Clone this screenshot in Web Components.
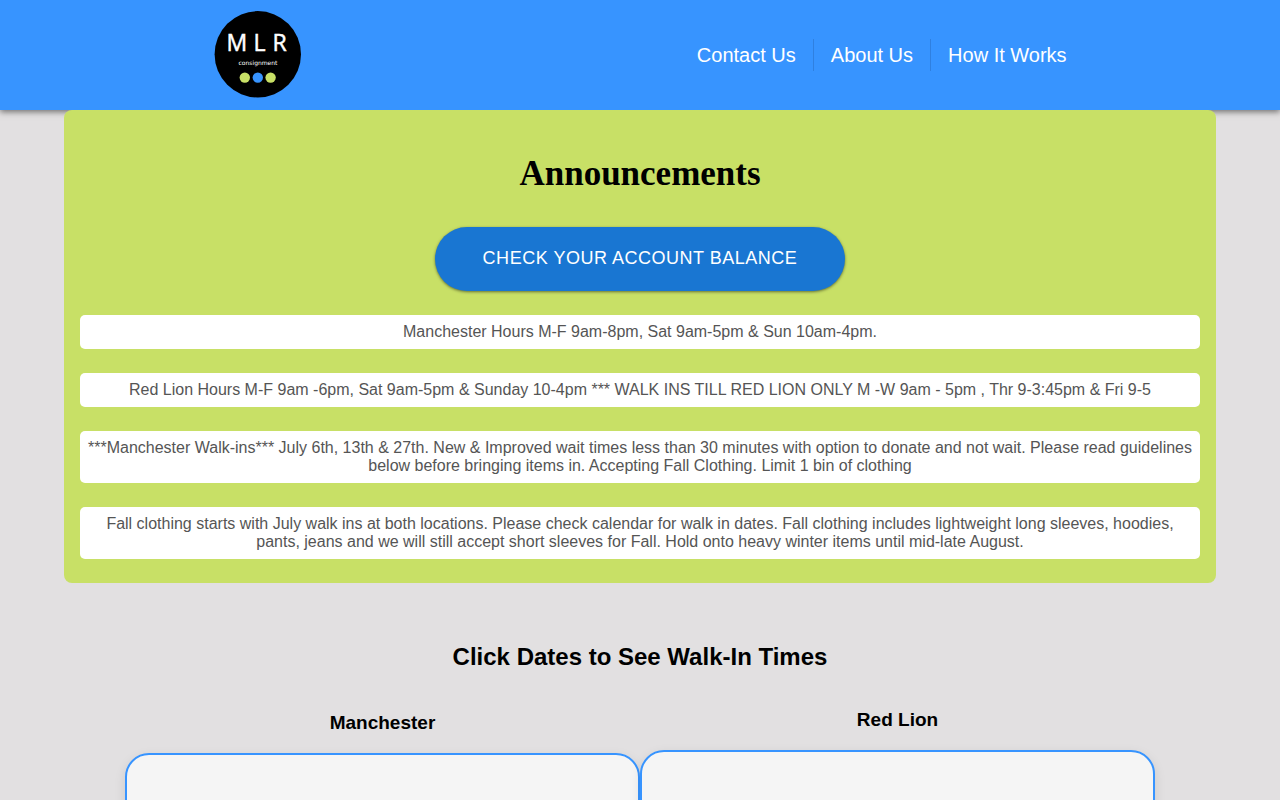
<!DOCTYPE html>
<html lang="en">
<head>
<meta charset="utf-8">
<meta name="viewport" content="width=device-width, initial-scale=1">
<title>MLR Consignment</title>
<style>
    :root {
        --blue: #3794ff;
        --blue-dark: #1976d2;
        --green: #c8e066;
        --page: #e2e0e1;
    }

    body {
        margin: 0;
        background-color: var(--page);
        font-family: "Liberation Sans", Arial, sans-serif;
    }
</style>
</head>
<body>
<site-header>
    <site-logo slot="logo"></site-logo>
    <nav-link href="#contact">Contact Us</nav-link>
    <nav-link href="#about">About Us</nav-link>
    <nav-link href="#how">How It Works</nav-link>
</site-header>
<main>
    <announcement-board heading="Announcements">
        <balance-button slot="action">Check Your Account Balance</balance-button>
        <announcement-item>Manchester Hours M-F 9am-8pm, Sat 9am-5pm &amp; Sun 10am-4pm.</announcement-item>
        <announcement-item>Red Lion Hours M-F 9am -6pm, Sat 9am-5pm &amp; Sunday 10-4pm *** WALK INS TILL RED LION ONLY M -W 9am - 5pm , Thr 9-3:45pm &amp; Fri 9-5</announcement-item>
        <announcement-item>***Manchester Walk-ins*** July 6th, 13th &amp; 27th. New &amp; Improved wait times less than 30 minutes with option to donate and not wait. Please read guidelines below before bringing items in. Accepting Fall Clothing. Limit 1 bin of clothing</announcement-item>
        <announcement-item>Fall clothing starts with July walk ins at both locations. Please check calendar for walk in dates. Fall clothing includes lightweight long sleeves, hoodies, pants, jeans and we will still accept short sleeves for Fall. Hold onto heavy winter items until mid-late August.</announcement-item>
    </announcement-board>
    <walkin-section heading="Click Dates to See Walk-In Times">
        <store-calendar store="Manchester"></store-calendar>
        <store-calendar store="Red Lion" tall></store-calendar>
    </walkin-section>
</main>

<script>
class SiteHeader extends HTMLElement {
    constructor() {
        super();
        this.attachShadow({ mode: 'open' });

        const CSS = /* css */
        `
        :host {
            display: block;
            background-color: var(--blue);
            box-shadow: 0 2px 6px rgba(0, 0, 0, 0.5);
        }

        header {
            display: flex;
            align-items: center;
            justify-content: space-between;
            width: 66.66%;
            min-height: 110px;
            margin: 0 auto;
        }

        nav {
            display: flex;
            align-items: center;
        }
        `;

        this.shadowRoot.innerHTML = /* html */
        `
        <style>${CSS}</style>
        <header>
            <slot name="logo"></slot>
            <nav><slot></slot></nav>
        </header>
        `;
    }
}

class SiteLogo extends HTMLElement {
    constructor() {
        super();
        this.attachShadow({ mode: 'open' });

        const CSS = /* css */
        `
        :host {
            display: block;
        }

        a, svg {
            display: block;
        }

        text {
            fill: #fff;
        }

        .name {
            font-family: "Open Sans", sans-serif;
            font-size: 23px;
        }

        .tag {
            font-family: "DejaVu Sans", sans-serif;
            font-size: 6px;
            text-anchor: middle;
        }
        `;

        this.shadowRoot.innerHTML = /* html */
        `
        <style>${CSS}</style>
        <a href="#home" aria-label="MLR consignment home">
            <svg width="88" height="88" viewBox="0 0 88 88">
                <circle cx="44.8" cy="43.3" r="43.2" fill="#000"/>
                <text class="name" x="13.5 40.5 59.5" y="40" stroke="#fff" stroke-width=".5">MLR</text>
                <text class="tag" x="45" y="54">consignment</text>
                <circle cx="31.8" cy="66.6" r="5.2" fill="#c8e066"/>
                <circle cx="44.8" cy="66.6" r="5.2" fill="#3794ff"/>
                <circle cx="57.6" cy="66.6" r="5.2" fill="#c8e066"/>
            </svg>
        </a>
        `;
    }
}

class NavLink extends HTMLElement {
    constructor() {
        super();
        this.attachShadow({ mode: 'open' });

        const href = this.getAttribute('href') || '#';

        const CSS = /* css */
        `
        :host {
            display: block;
            padding: 4px 17px;
            border-right: 1px solid #2f80e0;
        }

        :host(:last-child) {
            padding-right: 0;
            border-right: none;
        }

        a {
            color: #fff;
            font-size: 20px;
            line-height: 24px;
            text-decoration: none;
        }

        a:hover {
            text-decoration: underline;
        }
        `;

        this.shadowRoot.innerHTML = /* html */
        `
        <style>${CSS}</style>
        <a href="${href}"><slot></slot></a>
        `;
    }
}

class AnnouncementBoard extends HTMLElement {
    constructor() {
        super();
        this.attachShadow({ mode: 'open' });

        const heading = this.getAttribute('heading') || '';

        const CSS = /* css */
        `
        :host {
            display: block;
            box-sizing: border-box;
            width: 90%;
            margin: 0 auto;
            padding: 40px 16px 24px;
            background-color: var(--green);
            border-radius: 8px;
        }

        section {
            display: flex;
            flex-direction: column;
            gap: 24px;
        }

        h1 {
            margin: 0;
            padding-bottom: 5px;
            font-family: "Liberation Serif", "Times New Roman", serif;
            font-size: 35px;
            line-height: 48px;
            text-align: center;
        }
        `;

        this.shadowRoot.innerHTML = /* html */
        `
        <style>${CSS}</style>
        <section>
            <h1>${heading}</h1>
            <slot name="action"></slot>
            <slot></slot>
        </section>
        `;
    }
}

class BalanceButton extends HTMLElement {
    constructor() {
        super();
        this.attachShadow({ mode: 'open' });

        const CSS = /* css */
        `
        :host {
            display: block;
            text-align: center;
        }

        button {
            display: block;
            min-height: 64px;
            margin: 0 auto;
            padding: 0 48px 2px;
            border: none;
            border-radius: 32px;
            background-color: var(--blue-dark);
            box-shadow: 0 1px 3px rgba(0, 0, 0, 0.5);
            color: #fff;
            font-family: inherit;
            font-size: 18px;
            letter-spacing: 0.02857em;
            text-transform: uppercase;
            cursor: pointer;
        }

        button:hover {
            background-color: #1565c0;
        }
        `;

        this.shadowRoot.innerHTML = /* html */
        `
        <style>${CSS}</style>
        <button type="button"><slot></slot></button>
        `;
    }
}

class AnnouncementItem extends HTMLElement {
    constructor() {
        super();
        this.attachShadow({ mode: 'open' });

        const CSS = /* css */
        `
        :host {
            display: block;
            padding: 8px;
            background-color: #fff;
            border-radius: 5px;
        }

        p {
            margin: 0;
            color: #555;
            font-size: 16px;
            line-height: 18px;
            text-align: center;
        }
        `;

        this.shadowRoot.innerHTML = /* html */
        `
        <style>${CSS}</style>
        <p><slot></slot></p>
        `;
    }
}

class WalkinSection extends HTMLElement {
    constructor() {
        super();
        this.attachShadow({ mode: 'open' });

        const heading = this.getAttribute('heading') || '';

        const CSS = /* css */
        `
        :host {
            display: block;
            padding: 60px 0;
        }

        h2 {
            margin: 0;
            font-size: 24px;
            line-height: 28px;
            text-align: center;
        }

        .calendars {
            display: flex;
            justify-content: center;
            align-items: center;
            margin-top: 38px;
        }
        `;

        this.shadowRoot.innerHTML = /* html */
        `
        <style>${CSS}</style>
        <h2>${heading}</h2>
        <div class="calendars"><slot></slot></div>
        `;
    }
}

class StoreCalendar extends HTMLElement {
    constructor() {
        super();
        this.attachShadow({ mode: 'open' });

        const store = this.getAttribute('store') || '';

        const CSS = /* css */
        `
        :host {
            display: block;
            flex: 1;
            max-width: 515px;
        }

        h3 {
            margin: 0 0 19px;
            font-size: 19px;
            line-height: 22px;
            text-align: center;
        }

        .calendar {
            min-height: 420px;
            border: 2px solid var(--blue);
            border-radius: 24px;
            background-color: #f5f5f5;
            box-shadow: 0 4px 12px rgba(0, 0, 0, 0.1);
        }

        :host([tall]) .calendar {
            min-height: 426px;
        }
        `;

        this.shadowRoot.innerHTML = /* html */
        `
        <style>${CSS}</style>
        <h3>${store}</h3>
        <div class="calendar"></div>
        `;
    }
}

customElements.define('site-header', SiteHeader);
customElements.define('site-logo', SiteLogo);
customElements.define('nav-link', NavLink);
customElements.define('announcement-board', AnnouncementBoard);
customElements.define('balance-button', BalanceButton);
customElements.define('announcement-item', AnnouncementItem);
customElements.define('walkin-section', WalkinSection);
customElements.define('store-calendar', StoreCalendar);
</script>
</body>
</html>
